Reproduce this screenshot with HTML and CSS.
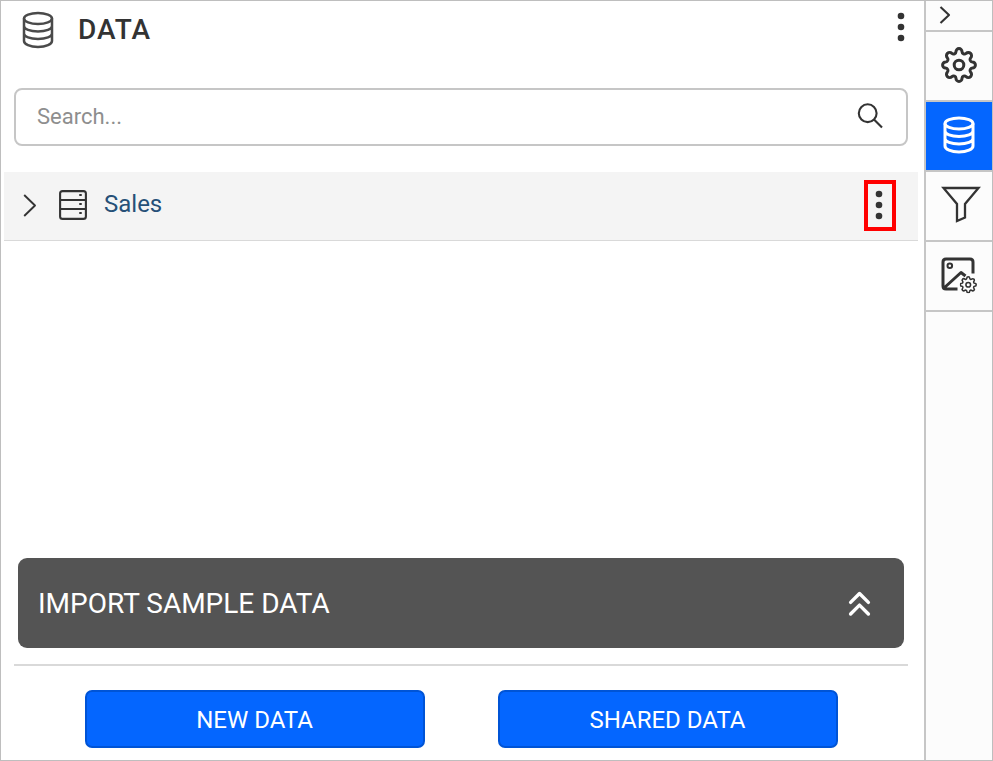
FILE: index.html
```html
<!DOCTYPE html>
<html lang="en">
<head>
<meta charset="utf-8">
<title>Data</title>
<link rel="stylesheet" href="styles.css">
</head>
<body>
<svg class="defs" width="0" height="0" aria-hidden="true">
  <symbol id="gear" viewBox="-18 -18 36 36">
    <path d="M-3-13.4A3 3 0 0 1 3-13.4A2.5 2.5 0 0 0 7.1-11.6A3 3 0 0 1 11.6-7.1A2.5 2.5 0 0 0 13.4-3A3 3 0 0 1 13.4 3A2.5 2.5 0 0 0 11.6 7.1A3 3 0 0 1 7.1 11.6A2.5 2.5 0 0 0 3 13.4A3 3 0 0 1-3 13.4A2.5 2.5 0 0 0-7.1 11.6A3 3 0 0 1-11.6 7.1A2.5 2.5 0 0 0-13.4 3A3 3 0 0 1-13.4-3A2.5 2.5 0 0 0-11.6-7.1A3 3 0 0 1-7.1-11.6A2.5 2.5 0 0 0-3-13.4Z"/>
    <circle r="4.8"/>
  </symbol>
  <symbol id="database" viewBox="0 0 32 38">
    <ellipse cx="16" cy="7.5" rx="14" ry="5.5"/>
    <path d="M2 7.5V30C2 33.2 8 36 16 36S30 33.2 30 30V7.5M2 15C2 18.2 8 20.5 16 20.5S30 18.2 30 15M2 22.5C2 25.7 8 28 16 28S30 25.7 30 22.5"/>
  </symbol>
  <symbol id="dots" viewBox="0 0 8 30">
    <circle cx="4" cy="4" r="3.3"/><circle cx="4" cy="15" r="3.3"/><circle cx="4" cy="26" r="3.3"/>
  </symbol>
</svg>
<div class="app">
  <main class="panel">
    <header class="header">
      <svg class="icon header-icon"><use href="#database"/></svg>
      <h1>DATA</h1>
      <svg class="dots"><use href="#dots"/></svg>
    </header>
    <div class="search">
      <span>Search...</span>
      <svg class="icon search-icon" viewBox="0 0 26 26"><circle cx="10.7" cy="10.2" r="8.9"/><path d="M17 16.5L25 24.5"/></svg>
    </div>
    <div class="source">
      <svg class="icon chevron" viewBox="0 0 14 24"><path d="M1.2 2L12 12.5L1.2 23"/></svg>
      <svg class="icon table" viewBox="0 0 28 30"><rect x="1.1" y="1.1" width="25.8" height="27.8" rx="2.5"/><path d="M1 10H27M1 19H27"/><path class="lights" d="M21.5 4V6M21.5 13V15M21.5 22V24"/></svg>
      <span class="source-name">Sales</span>
      <span class="highlight"><svg class="dots"><use href="#dots"/></svg></span>
    </div>
    <div class="sample">
      <span>IMPORT SAMPLE DATA</span>
      <svg class="icon expand" viewBox="0 0 22 26"><path d="M2.6 12.4L11.5 3.5L20.4 12.4M2.6 24L11.5 15.1L20.4 24"/></svg>
    </div>
    <footer class="actions">
      <button>NEW DATA</button>
      <button>SHARED DATA</button>
    </footer>
  </main>
  <nav class="rail">
    <div class="cell collapse"><svg class="icon" width="12" height="18" viewBox="0 0 12 18"><path d="M1.5 1L10 9L1.5 17"/></svg></div>
    <div class="cell"><svg class="icon bold" width="36" height="36"><use href="#gear"/></svg></div>
    <div class="cell active"><svg class="icon bold" width="32" height="38"><use href="#database"/></svg></div>
    <div class="cell"><svg class="icon filter" width="40" height="38" viewBox="0 0 40 38"><path d="M2.5 2H37.5L24 18V31.5L16 35V18Z"/></svg></div>
    <div class="cell"><svg class="icon bold picture" width="38" height="38" viewBox="0 0 38 38"><path d="M17.5 33H6Q3 33 3 30V6Q3 3 6 3H30Q33 3 33 6V17.5M4 32L21 16.5L25.5 20"/><circle class="thin" cx="9.8" cy="9.8" r="2.3"/><svg class="small-gear" x="19.5" y="20" width="17.5" height="17.5"><use href="#gear"/></svg></svg></div>
  </nav>
</div>
</body>
</html>
```

FILE: styles.css
```css
* { box-sizing: border-box; }

body {
  margin: 0;
  font-family: Roboto, "Liberation Sans", sans-serif;
  color: #333;
}

.defs { position: absolute; }

.app {
  display: flex;
  width: 993px;
  height: 761px;
  border: 1px solid #bebebe;
  background: #fff;
}

svg { display: block; flex: none; }

.icon {
  fill: none;
  stroke: #333;
  stroke-width: 2.1;
  stroke-linejoin: round;
}

.bold { stroke-width: 3; }

.dots { width: 8px; height: 30px; fill: #333; }

.panel {
  display: flex;
  flex-direction: column;
  width: 923px;
}

.header {
  display: flex;
  align-items: center;
  height: 87px;
  padding: 0 19px 30px 21px;
}

.header-icon {
  width: 32px;
  height: 38px;
  margin-top: 1px;
  stroke: #4a4a4a;
  stroke-width: 2.5;
}

h1 {
  flex: 1;
  margin: 0 0 0 24px;
  font-size: 28px;
  font-weight: 500;
  letter-spacing: 1px;
  line-height: 34px;
}

.header .dots { margin-top: -5px; }

.search {
  display: flex;
  align-items: center;
  justify-content: space-between;
  height: 58px;
  margin: 0 16px 0 13px;
  padding: 0 23px 2px 21px;
  border: 2px solid #c6c6c6;
  border-radius: 8px;
  color: #8e8e8e;
  font-size: 22px;
}

.search-icon { width: 26px; height: 26px; }

.source {
  display: flex;
  align-items: center;
  height: 69px;
  margin: 26px 6px 0 3px;
  padding: 0 22px 2px 19px;
  border-bottom: 1px solid #d9d9d9;
  background: #f4f4f4;
}

.chevron { width: 14px; height: 24px; stroke-width: 1.9; }

.table { width: 28px; height: 30px; margin-left: 22px; }

.lights { stroke-width: 2.5; }

.source-name {
  flex: 1;
  margin: -3px 0 0 17px;
  color: #265078;
  font-size: 24px;
}

.highlight {
  display: flex;
  align-items: center;
  justify-content: center;
  width: 32px;
  height: 51px;
  padding-right: 2px;
  border: 4px solid #f00;
}

.sample {
  display: flex;
  align-items: center;
  justify-content: space-between;
  height: 90px;
  margin: auto 20px 0 17px;
  padding: 0 34px 0 20px;
  border-radius: 9px;
  background: #545454;
  color: #fff;
  font-size: 28px;
}

.expand {
  width: 22px;
  height: 26px;
  stroke: #fff;
  stroke-width: 3.4;
  stroke-linecap: round;
  overflow: visible;
}

.actions {
  display: flex;
  gap: 73px;
  height: 96px;
  margin: 16px 16px 0 13px;
  padding: 24px 0 0 71px;
  border-top: 2px solid #d9d9d9;
}

button {
  width: 340px;
  height: 58px;
  padding: 2px 1px 0 0;
  border: 2px solid #0054d6;
  border-radius: 7px;
  background: #0466ff;
  color: #fff;
  font: 24px Roboto, "Liberation Sans", sans-serif;
}

.rail {
  width: 68px;
  border-left: 2px solid #c6c6c6;
  background: #fcfcfc;
}

.cell {
  display: flex;
  align-items: center;
  justify-content: center;
  height: 70px;
  padding-bottom: 2px;
  border-bottom: 2px solid #c6c6c6;
}

.collapse {
  justify-content: flex-start;
  height: 31px;
  padding: 0 0 2px 13px;
}

.active { background: #0466ff; }

.active .icon { stroke: #fff; }

.filter { stroke-width: 2.3; stroke-linejoin: miter; margin-left: 3px; }

.thin { stroke-width: 2; }

.small-gear { stroke-width: 3.2; }
```
